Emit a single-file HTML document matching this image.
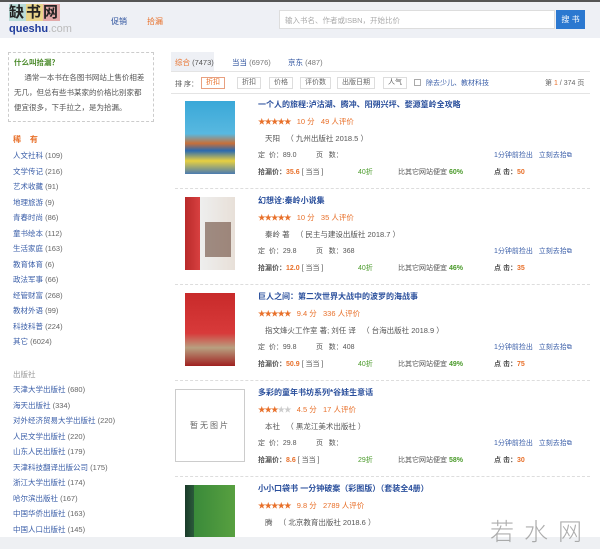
<!DOCTYPE html>
<html><head><meta charset="utf-8"><style>
*{margin:0;padding:0;box-sizing:border-box}
html,body{width:600px;height:549px;overflow:hidden}
body{background:#fff;font-family:"Liberation Sans","Noto Sans CJK SC",sans-serif;font-size:8px;color:#555;position:relative}
.a{position:absolute;white-space:nowrap}
.hdr{position:absolute;left:0;top:0;width:600px;height:38px;background:#eef0f5;border-top:2px solid #555}
.blue{color:#2a4f9c}
.lk{color:#3a5ea8}
.or{color:#e8702a}
.gr{color:#4a9a2a}
.btn{position:absolute;top:77px;height:12px;border:1px solid #ddd;font-size:7px;line-height:10px;padding:0 4px;color:#666;background:#fff}
.side li{list-style:none;height:15.5px;color:#3a5ea8;font-size:7.5px}
.side li span{color:#666}
.row{position:absolute;left:175px;width:415px;height:96px;border-bottom:1px dashed #ddd}
.row .t{position:absolute;left:83px;top:6px;color:#2a4f9c;font-size:8px;font-weight:bold}
.row .s{position:absolute;left:83px;top:23px;color:#e8702a;font-size:7.5px}
.row .s b{color:#e8702a;letter-spacing:-1px}
.row .au{position:absolute;left:90px;top:40px;font-size:7.5px}
.row .p{position:absolute;left:83px;top:57px;font-size:7px;width:330px}
.row .q{position:absolute;left:83px;top:74px;font-size:7px;width:330px}
.cv{position:absolute;left:10px;top:8px;width:50px;height:73px}
</style></head><body>
<div class="hdr"></div>
<div class="a" style="left:9px;top:4px;font-size:15px;line-height:18px;font-weight:bold;color:#222;letter-spacing:2px"><span style="background:#b9dcd8">缺</span><span style="background:#e9d58a">书</span><span style="background:#e2a8a8">网</span></div>
<div class="a" style="left:9px;top:23px;font-size:11px;line-height:13px;font-weight:bold;color:#1f3c9c">queshu<span style="color:#bbb;font-weight:normal">.com</span></div>
<div class="a" style="left:111px;top:16px;font-size:8px;color:#2a4f9c">促销</div>
<div class="a" style="left:147px;top:16px;font-size:8px;color:#e8702a">拾漏</div>
<div class="a" style="left:279px;top:10px;width:276px;height:19px;background:#fff;border:1px solid #ddd;font-size:7.5px;color:#aaa;padding:4px 5px">输入书名、作者或ISBN，开始比价</div>
<div class="a" style="left:556px;top:10px;width:29px;height:19px;background:#2b78d0;color:#fff;font-size:8px;text-align:center;line-height:19px">搜 书</div>

<div class="a" style="left:8px;top:52px;width:146px;height:70px;border:1px dashed #ccc;font-size:7.5px;line-height:15px;padding:2px 5px;white-space:normal">
<div style="color:#4a8a2a;font-weight:bold">什么叫拾漏？</div>
<div>&nbsp;&nbsp;&nbsp;&nbsp;&nbsp;通常一本书在各图书网站上售价相差无几，但总有些书某家的价格比别家都便宜很多，下手拉之，是为拾漏。</div></div>

<div class="a" style="left:13px;top:134px;font-size:8px;color:#e8702a;font-weight:bold">稀&nbsp;&nbsp;&nbsp;&nbsp;有</div>
<ul class="a side" style="left:13px;top:150px">
<li>人文社科 <span>(109)</span></li><li>文学传记 <span>(216)</span></li><li>艺术收藏 <span>(91)</span></li><li>地理旅游 <span>(9)</span></li><li>青春时尚 <span>(86)</span></li><li>童书绘本 <span>(112)</span></li><li>生活家庭 <span>(163)</span></li><li>教育体育 <span>(6)</span></li><li>政法军事 <span>(66)</span></li><li>经管财富 <span>(268)</span></li><li>教材外语 <span>(99)</span></li><li>科技科普 <span>(224)</span></li><li>其它 <span>(6024)</span></li></ul>
<div class="a" style="left:13px;top:369px;font-size:7.5px;color:#999">出版社</div>
<ul class="a side" style="left:13px;top:384px">
<li>天津大学出版社 <span>(680)</span></li><li>海天出版社 <span>(334)</span></li><li>对外经济贸易大学出版社 <span>(220)</span></li><li>人民文学出版社 <span>(220)</span></li><li>山东人民出版社 <span>(179)</span></li><li>天津科技翻译出版公司 <span>(175)</span></li><li>浙江大学出版社 <span>(174)</span></li><li>哈尔滨出版社 <span>(167)</span></li><li>中国华侨出版社 <span>(163)</span></li><li>中国人口出版社 <span>(145)</span></li></ul>

<div class="a" style="left:171px;top:52px;width:43px;height:19px;background:#eef0f5"></div>
<div class="a" style="left:175px;top:57px;font-size:7.5px"><span class="or">综合</span> (7473)</div>
<div class="a" style="left:232px;top:57px;font-size:7.5px;color:#777"><span class="blue">当当</span> (6976)</div>
<div class="a" style="left:288px;top:57px;font-size:7.5px;color:#777"><span class="blue">京东</span> (487)</div>
<div class="a" style="left:171px;top:71px;width:419px;border-top:1px solid #e4e4e4"></div>
<div class="a" style="left:175px;top:79px;font-size:7px">排 序：</div>
<div class="btn" style="left:201px;color:#e8702a;border-color:#e8a080">折扣</div>
<div class="btn" style="left:237px">折扣</div>
<div class="btn" style="left:269px">价格</div>
<div class="btn" style="left:300px">评价数</div>
<div class="btn" style="left:337px">出版日期</div>
<div class="btn" style="left:383px">人气</div>
<div class="a" style="left:414px;top:79px;width:7px;height:7px;border:1px solid #aaa"></div>
<div class="a lk" style="left:426px;top:78px;font-size:7px">除去少儿、教材科技</div>
<div class="a" style="left:545px;top:78px;font-size:7px;color:#666">第 <span class="or">1</span> / 374 页</div>
<div class="a" style="left:171px;top:93px;width:419px;border-top:1px solid #e4e4e4"></div>

<div class="row" style="top:93px">
<div class="cv" style="background:linear-gradient(#3aa8d8 0,#58b8e0 45%,#c8703a 58%,#2a6ab0 68%,#e8d040 82%,#4a7ab0 100%)"></div>
<div class="t">一个人的旅程:泸沽湖、腾冲、阳朔兴坪、婺源篁岭全攻略</div>
<div class="s"><b>★★★★★</b>&nbsp;&nbsp;&nbsp;10 分&nbsp;&nbsp;&nbsp;49 人评价</div>
<div class="au">天阳 &nbsp;&nbsp;（ 九州出版社 2018.5 ）</div>
<div class="p">定&nbsp;&nbsp;价：89.0 &nbsp;&nbsp;&nbsp;&nbsp;&nbsp;&nbsp;&nbsp;&nbsp;&nbsp;页&nbsp;&nbsp;&nbsp;数：<span class="a lk" style="left:236px;top:0">1分钟前捡出&nbsp;&nbsp;&nbsp;立刻去拾&#x29C9;</span></div>
<div class="q"><b>拾漏价：<span class="or">35.6</span></b> [ 当当 ]<span class="a gr" style="left:100px">40折</span><span class="a" style="left:140px">比其它网站便宜 <b class="gr">60%</b></span><span class="a" style="left:236px"><b>点 击：<span class="or">50</span></b></span></div>
</div>

<div class="row" style="top:189px">
<div class="cv" style="background:linear-gradient(90deg,#b82a2a 0,#d84040 30%,#eee 30%,#e8e0d8 100%)"><div style="position:absolute;left:20px;top:25px;width:26px;height:35px;background:#6a4a3a;opacity:.6"></div></div>
<div class="t">幻想诠:秦岭小说集</div>
<div class="s"><b>★★★★★</b>&nbsp;&nbsp;&nbsp;10 分&nbsp;&nbsp;&nbsp;35 人评价</div>
<div class="au">秦岭 著 &nbsp;&nbsp;（ 民主与建设出版社 2018.7 ）</div>
<div class="p">定&nbsp;&nbsp;价：29.8 &nbsp;&nbsp;&nbsp;&nbsp;&nbsp;&nbsp;&nbsp;&nbsp;&nbsp;页&nbsp;&nbsp;&nbsp;数：368<span class="a lk" style="left:236px;top:0">1分钟前捡出&nbsp;&nbsp;&nbsp;立刻去拾&#x29C9;</span></div>
<div class="q"><b>拾漏价：<span class="or">12.0</span></b> [ 当当 ]<span class="a gr" style="left:100px">40折</span><span class="a" style="left:140px">比其它网站便宜 <b class="gr">46%</b></span><span class="a" style="left:236px"><b>点 击：<span class="or">35</span></b></span></div>
</div>

<div class="row" style="top:285px">
<div class="cv" style="background:linear-gradient(#c82a2a 0,#d83a3a 55%,#b8a080 75%,#a02020 100%)"></div>
<div class="t">巨人之间：第二次世界大战中的波罗的海战事</div>
<div class="s"><b>★★★★★</b>&nbsp;&nbsp;&nbsp;9.4 分&nbsp;&nbsp;&nbsp;336 人评价</div>
<div class="au">指文烽火工作室 著; 刘任 译 &nbsp;&nbsp;（ 台海出版社 2018.9 ）</div>
<div class="p">定&nbsp;&nbsp;价：99.8 &nbsp;&nbsp;&nbsp;&nbsp;&nbsp;&nbsp;&nbsp;&nbsp;&nbsp;页&nbsp;&nbsp;&nbsp;数：408<span class="a lk" style="left:236px;top:0">1分钟前捡出&nbsp;&nbsp;&nbsp;立刻去拾&#x29C9;</span></div>
<div class="q"><b>拾漏价：<span class="or">50.9</span></b> [ 当当 ]<span class="a gr" style="left:100px">40折</span><span class="a" style="left:140px">比其它网站便宜 <b class="gr">49%</b></span><span class="a" style="left:236px"><b>点 击：<span class="or">75</span></b></span></div>
</div>

<div class="row" style="top:381px">
<div class="cv" style="left:0;width:70px;border:1px solid #ccc;font-size:8px;color:#666;text-align:center;line-height:71px;letter-spacing:2px">暂无图片</div>
<div class="t">多彩的童年书坊系列*谷娃生意话</div>
<div class="s"><b>★★★<span style="color:#ccc">★★</span></b>&nbsp;&nbsp;&nbsp;4.5 分&nbsp;&nbsp;&nbsp;17 人评价</div>
<div class="au">本社 &nbsp;&nbsp;（ 黑龙江美术出版社 ）</div>
<div class="p">定&nbsp;&nbsp;价：29.8 &nbsp;&nbsp;&nbsp;&nbsp;&nbsp;&nbsp;&nbsp;&nbsp;&nbsp;页&nbsp;&nbsp;&nbsp;数：<span class="a lk" style="left:236px;top:0">1分钟前捡出&nbsp;&nbsp;&nbsp;立刻去拾&#x29C9;</span></div>
<div class="q"><b>拾漏价：<span class="or">8.6</span></b> [ 当当 ]<span class="a gr" style="left:100px">29折</span><span class="a" style="left:140px">比其它网站便宜 <b class="gr">58%</b></span><span class="a" style="left:236px"><b>点 击：<span class="or">30</span></b></span></div>
</div>

<div class="row" style="top:477px;border:0;height:60px;overflow:hidden">
<div class="cv" style="background:linear-gradient(90deg,#1a3a2a 0,#2a5a3a 18%,#3a8a3a 18%,#58a040 100%)"></div>
<div class="t">小小口袋书 一分钟破案（彩图版）（套装全4册）</div>
<div class="s"><b>★★★★★</b>&nbsp;&nbsp;&nbsp;9.8 分&nbsp;&nbsp;&nbsp;2789 人评价</div>
<div class="au">腾 &nbsp;&nbsp;（ 北京教育出版社 2018.6 ）</div>
</div>
<div class="a" style="left:0;top:537px;width:600px;height:12px;background:#eef0f3"></div>
<div class="a" style="left:490px;top:512px;font-size:24px;color:#999;letter-spacing:10px;font-family:'Noto Sans CJK SC',sans-serif;font-weight:300;opacity:.8">若水网</div>
</body></html>
